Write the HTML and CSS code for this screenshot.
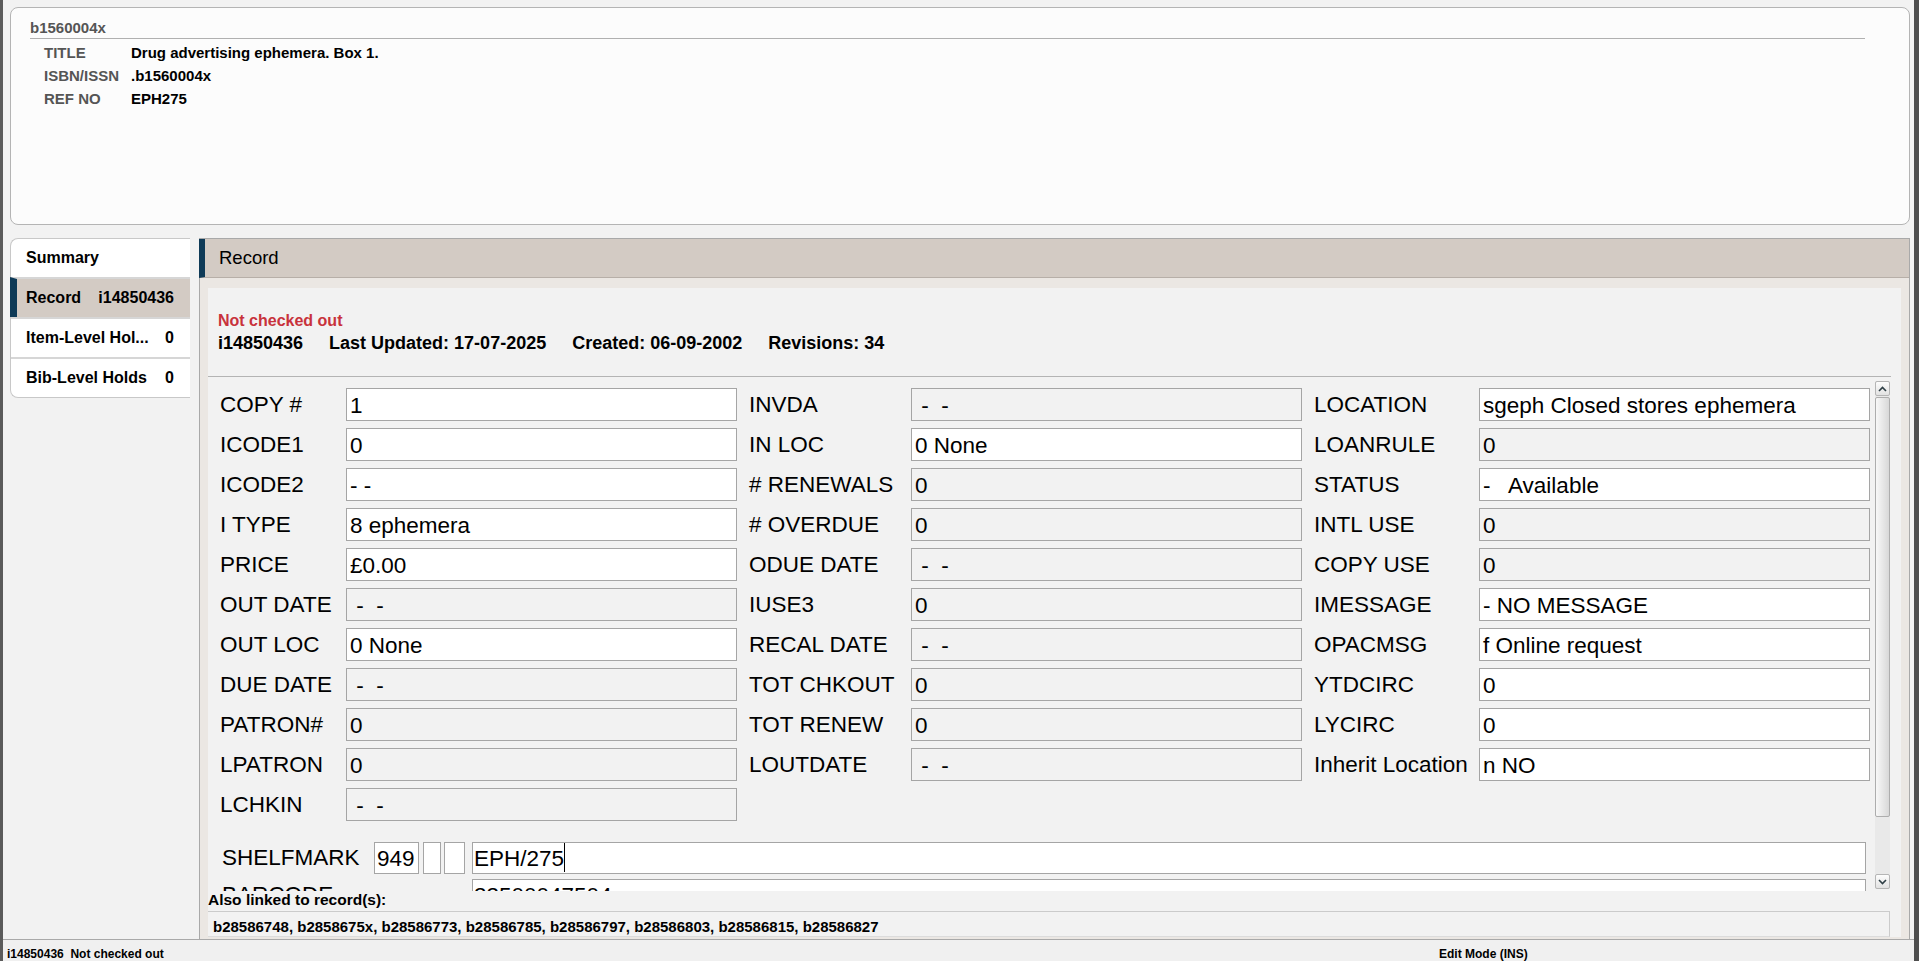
FILE: index.html
```html
<!DOCTYPE html>
<html>

<head>
    <title>i14850436</title>
    <link rel="stylesheet" href="styles.css">
</head>

<body>
    <div class="window">
        <div class="bib-panel">
            <div class="bib-id">b1560004x</div>
            <div class="bib-rows">
                <div class="bib-row"><span class="bib-label">TITLE</span><span class="bib-value">Drug advertising ephemera. Box 1.</span></div>
                <div class="bib-row"><span class="bib-label">ISBN/ISSN</span><span class="bib-value">.b1560004x</span></div>
                <div class="bib-row"><span class="bib-label">REF NO</span><span class="bib-value">EPH275</span></div>
            </div>
        </div>

        <div class="main">
            <div class="nav">
                <div class="nav-item"><span>Summary</span></div>
                <div class="nav-item active"><span>Record</span><span>i14850436</span></div>
                <div class="nav-item"><span>Item-Level Hol...</span><span>0</span></div>
                <div class="nav-item"><span>Bib-Level Holds</span><span>0</span></div>
            </div>

            <div class="pane">
                <div class="pane-title">Record</div>
                <div class="pane-body">
                    <div class="record">
                        <div class="meta">
                            <div class="status-line">Not checked out</div>
                            <div class="meta-line">
                                <span>i14850436</span>
                                <span>Last Updated: 17-07-2025</span>
                                <span>Created: 06-09-2002</span>
                                <span>Revisions: 34</span>
                            </div>
                        </div>

                        <div class="scroll">
                            <div class="form">
                                <div class="fields">
                                    <div class="col col-1">
                                        <div class="field"><span class="label">COPY #</span><span class="box">1</span></div>
                                        <div class="field"><span class="label">ICODE1</span><span class="box">0</span></div>
                                        <div class="field"><span class="label">ICODE2</span><span class="box">- -</span></div>
                                        <div class="field"><span class="label">I TYPE</span><span class="box">8 ephemera</span></div>
                                        <div class="field"><span class="label">PRICE</span><span class="box">£0.00</span></div>
                                        <div class="field"><span class="label">OUT DATE</span><span class="box ro"> -  -</span></div>
                                        <div class="field"><span class="label">OUT LOC</span><span class="box">0 None</span></div>
                                        <div class="field"><span class="label">DUE DATE</span><span class="box ro"> -  -</span></div>
                                        <div class="field"><span class="label">PATRON#</span><span class="box ro">0</span></div>
                                        <div class="field"><span class="label">LPATRON</span><span class="box ro">0</span></div>
                                        <div class="field"><span class="label">LCHKIN</span><span class="box ro"> -  -</span></div>
                                    </div>
                                    <div class="col col-2">
                                        <div class="field"><span class="label">INVDA</span><span class="box ro"> -  -</span></div>
                                        <div class="field"><span class="label">IN LOC</span><span class="box">0 None</span></div>
                                        <div class="field"><span class="label"># RENEWALS</span><span class="box ro">0</span></div>
                                        <div class="field"><span class="label"># OVERDUE</span><span class="box ro">0</span></div>
                                        <div class="field"><span class="label">ODUE DATE</span><span class="box ro"> -  -</span></div>
                                        <div class="field"><span class="label">IUSE3</span><span class="box ro">0</span></div>
                                        <div class="field"><span class="label">RECAL DATE</span><span class="box ro"> -  -</span></div>
                                        <div class="field"><span class="label">TOT CHKOUT</span><span class="box ro">0</span></div>
                                        <div class="field"><span class="label">TOT RENEW</span><span class="box ro">0</span></div>
                                        <div class="field"><span class="label">LOUTDATE</span><span class="box ro"> -  -</span></div>
                                    </div>
                                    <div class="col col-3">
                                        <div class="field"><span class="label">LOCATION</span><span class="box">sgeph Closed stores ephemera</span></div>
                                        <div class="field"><span class="label">LOANRULE</span><span class="box ro">0</span></div>
                                        <div class="field"><span class="label">STATUS</span><span class="box">-   Available</span></div>
                                        <div class="field"><span class="label">INTL USE</span><span class="box ro">0</span></div>
                                        <div class="field"><span class="label">COPY USE</span><span class="box ro">0</span></div>
                                        <div class="field"><span class="label">IMESSAGE</span><span class="box">- NO MESSAGE</span></div>
                                        <div class="field"><span class="label">OPACMSG</span><span class="box">f Online request</span></div>
                                        <div class="field"><span class="label">YTDCIRC</span><span class="box">0</span></div>
                                        <div class="field"><span class="label">LYCIRC</span><span class="box">0</span></div>
                                        <div class="field"><span class="label">Inherit Location</span><span class="box">n NO</span></div>
                                    </div>
                                </div>

                                <div class="shelf">
                                    <span class="label">SHELFMARK</span>
                                    <span class="sbox tag">949</span>
                                    <span class="sbox ind1"></span>
                                    <span class="sbox ind2"></span>
                                    <span class="sbox wide">EPH/275<span class="caret"></span></span>
                                </div>
                                <div class="barcode">
                                    <span class="label">BARCODE</span>
                                    <span class="sbox wide">33500047504</span>
                                </div>
                            </div>

                            <div class="scrollbar">
                                <div class="sb-btn">
                                    <svg width="9" height="6" viewBox="0 0 9 6"><polyline points="1,5 4.5,1.5 8,5" fill="none" stroke="#2f3f46" stroke-width="1.6"/></svg>
                                </div>
                                <div class="sb-thumb"></div>
                                <div class="sb-track"></div>
                                <div class="sb-btn">
                                    <svg width="9" height="6" viewBox="0 0 9 6"><polyline points="1,1 4.5,4.5 8,1" fill="none" stroke="#2f3f46" stroke-width="1.6"/></svg>
                                </div>
                            </div>
                        </div>

                        <div class="linked">
                            <div class="linked-title">Also linked to record(s):</div>
                            <div class="linked-list">b28586748, b2858675x, b28586773, b28586785, b28586797, b28586803, b28586815, b28586827</div>
                        </div>
                    </div>
                </div>
            </div>
        </div>

        <div class="statusbar">
            <span class="status-left">i14850436&nbsp; Not checked out</span>
            <span>Edit Mode (INS)</span>
        </div>
    </div>
</body>

</html>
```

FILE: styles.css
```css
body {
    margin: 0;
    font-family: "Liberation Sans", Arial, sans-serif;
    background-color: #f2f2f2;
    color: #000;
}

.window {
    height: 961px;
    box-sizing: border-box;
    border-left: 3px solid #5b5b5b;
    border-right: 5px solid #4e4e4e;
    display: flex;
    flex-direction: column;
    overflow: hidden;
    background: #f2f2f2;
}

/* bib summary at the top */
.bib-panel {
    margin: 7px 4px 0 7px;
    height: 218px;
    flex: none;
    box-sizing: border-box;
    border: 1px solid #b4b4b4;
    border-radius: 8px;
    background: #fcfcfc;
    padding: 11px 44px 0 19px;
}

.bib-id {
    font-size: 15px;
    font-weight: bold;
    color: #555;
    line-height: 18px;
    padding-bottom: 1px;
    border-bottom: 1px solid #b0b0b0;
}

.bib-rows {
    margin-top: 2px;
}

.bib-row {
    display: flex;
    line-height: 23px;
    padding-left: 14px;
    font-size: 15px;
    font-weight: bold;
}

.bib-label {
    width: 87px;
    color: #555;
}

/* left nav + record pane */
.main {
    flex: 1;
    display: flex;
    margin-top: 13px;
    min-height: 0;
}

.nav {
    width: 180px;
    flex: none;
    margin-left: 7px;
    align-self: flex-start;
    box-sizing: border-box;
    background: #fff;
    border: 1px solid #c8c8c8;
    border-right: none;
    border-radius: 8px 0 0 8px;
}

.nav-item {
    height: 38px;
    display: flex;
    align-items: center;
    justify-content: space-between;
    padding: 0 16px 0 15px;
    font-size: 16px;
    font-weight: bold;
    white-space: nowrap;
}

.nav-item + .nav-item {
    border-top: 2px solid #d6d6d6;
}

.nav-item.active {
    background: #d3cbc4;
    margin-left: -1px;
    border-left: 7px solid #0e3a57;
    padding-left: 9px;
}

.pane {
    flex: 1;
    margin: 0 4px 0 9px;
    border: 1px solid #a9a9a9;
    border-bottom: none;
    display: flex;
    flex-direction: column;
    min-width: 0;
}

.pane-title {
    height: 38px;
    flex: none;
    margin-left: -1px;
    border-left: 6px solid #0e3a57;
    border-bottom: 1px solid #b7afa8;
    background: #d3cbc4;
    display: flex;
    align-items: center;
    padding-left: 14px;
    font-size: 18.5px;
}

.pane-body {
    flex: 1;
    display: flex;
    flex-direction: column;
    background: #ebe7e3;
    padding: 10px 8px 2px;
    min-height: 0;
}

.record {
    flex: 1;
    display: flex;
    flex-direction: column;
    background: #f2f2f2;
    min-height: 0;
}

.meta {
    padding: 23px 10px 21px;
    margin-right: 10px;
    border-bottom: 1px solid #b4b4b4;
}

.status-line {
    color: #c8323c;
    font-size: 16px;
    font-weight: bold;
    line-height: 20px;
}

.meta-line {
    display: flex;
    gap: 26px;
    font-size: 18px;
    font-weight: bold;
    line-height: 24px;
}

/* record fields */
.scroll {
    flex: 1;
    display: flex;
    min-height: 0;
}

.form {
    flex: 1;
    overflow: hidden;
    padding: 11px 0 0 12px;
}

.fields {
    display: flex;
    gap: 12px;
}

.col {
    display: flex;
    flex-direction: column;
    gap: 7px;
}

.field {
    display: flex;
    align-items: center;
    height: 33px;
}

.label {
    flex: none;
    font-size: 22.5px;
    white-space: nowrap;
}

.col-1 .label {
    width: 126px;
}

.col-2 .label {
    width: 162px;
}

.col-3 .label {
    width: 165px;
}

.box {
    width: 391px;
    height: 33px;
    box-sizing: border-box;
    border: 1px solid #a5a5a5;
    background: #fff;
    font-size: 22.5px;
    line-height: 29px;
    padding: 2px 3px 0;
    white-space: pre;
    overflow: hidden;
}

.box.ro {
    background: #f2f2f2;
}

.shelf,
.barcode {
    display: flex;
    align-items: center;
    height: 32px;
}

.shelf {
    margin-top: 21px;
}

.barcode {
    margin-top: 5px;
}

.shelf .label {
    width: 152px;
    padding-left: 2px;
}

.barcode .label {
    width: 250px;
    padding-left: 2px;
}

.sbox {
    height: 32px;
    box-sizing: border-box;
    border: 1px solid #a5a5a5;
    background: #fff;
    font-size: 22.5px;
    line-height: 28px;
    padding: 2px 1px 0;
    white-space: pre;
    overflow: hidden;
}

.sbox.tag {
    width: 45px;
    margin-right: 4px;
    padding-left: 2px;
}

.sbox.ind1 {
    width: 18px;
    margin-right: 3px;
}

.sbox.ind2 {
    width: 21px;
    margin-right: 7px;
}

.sbox.wide {
    flex: 1;
    margin-right: 5px;
}

.caret {
    display: inline-block;
    width: 1px;
    height: 29px;
    background: #000;
    vertical-align: top;
    margin-top: -2px;
}

.scrollbar {
    width: 15px;
    flex: none;
    margin: 4px 11px 2px 4px;
    display: flex;
    flex-direction: column;
    background: #e9e9e9;
}

.sb-btn {
    height: 15px;
    flex: none;
    box-sizing: border-box;
    border: 1px solid #b5b5b5;
    border-radius: 2px;
    background: linear-gradient(#fdfdfd, #e2e2e2);
    display: flex;
    align-items: center;
    justify-content: center;
}

.sb-thumb {
    height: 420px;
    flex: none;
    margin-top: 1px;
    box-sizing: border-box;
    border: 1px solid #adadad;
    border-radius: 2px;
    background: linear-gradient(to right, #f8f8f8, #d8d8d8);
}

.sb-track {
    flex: 1;
}

.linked {
    flex: none;
}

.linked-title {
    font-size: 15.5px;
    font-weight: bold;
    line-height: 18px;
}

.linked-list {
    margin: 2px 11px 0 0;
    border-top: 1px solid #cbcbcb;
    border-right: 1px solid #cbcbcb;
    border-bottom: 1px solid #dcdcdc;
    padding: 6px 5px 0;
    height: 18px;
    font-size: 15px;
    font-weight: bold;
    line-height: 18px;
    white-space: nowrap;
}

.statusbar {
    height: 22px;
    flex: none;
    box-sizing: border-box;
    border-top: 1px solid #a9a9a9;
    background: #f0f0f0;
    display: flex;
    padding: 7px 0 0 4px;
    font-size: 12px;
    font-weight: bold;
    line-height: 14px;
    white-space: nowrap;
}

.status-left {
    width: 1432px;
    flex: none;
}
```
